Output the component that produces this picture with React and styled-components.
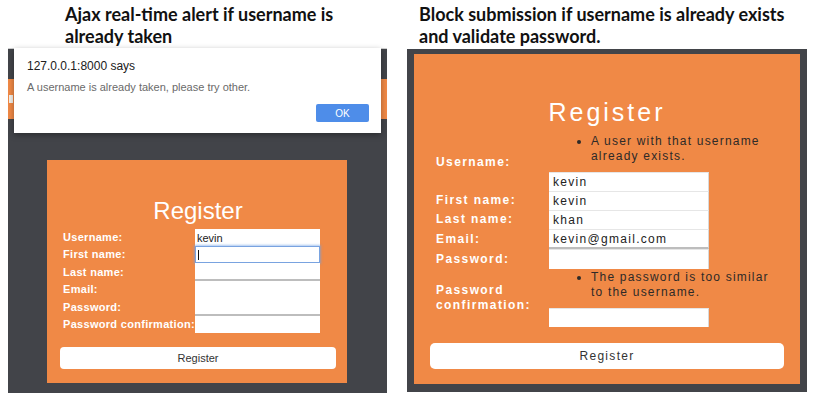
import React from "react";
import styled, { createGlobalStyle, css } from "styled-components";

const ORANGE = "#F08946";
const DARK = "#424449";

const Global = createGlobalStyle`
  html, body { margin: 0; padding: 0; background: #fff; }
  body {
    font-family: "Liberation Sans", Arial, sans-serif;
    width: 815px;
    height: 400px;
    overflow: hidden;
  }
`;

const Page = styled.div`
  display: flex;
  gap: 20px;
  padding-left: 8px;
`;

const Column = styled.section`
  display: flex;
  flex-direction: column;
  width: ${(p) => p.$w}px;
`;

const Heading = styled.h2`
  margin: 0;
  box-sizing: border-box;
  height: ${(p) => p.$h}px;
  padding: 3px 0 0 ${(p) => p.$indent}px;
  font-family: Lato, "Open Sans", sans-serif;
  font-weight: 700;
  font-size: 18px;
  line-height: 22px;
  color: #111;
  white-space: nowrap;
`;

/* ---------- left: browser screen with alert ---------- */

const Screen = styled.div`
  position: relative;
  box-sizing: border-box;
  height: 345px;
  background: ${DARK};
  border-top: 1px solid #cfcfcf;
  display: flex;
  flex-direction: column;
`;

const NavBar = styled.div`
  margin-top: 30px;
  height: 40px;
  background: ${ORANGE};
  display: flex;
  align-items: center;
  padding-left: 1px;
`;

const NavMark = styled.span`
  width: 4px;
  height: 8px;
  background: #f3efe9;
`;

const Alert = styled.div`
  position: absolute;
  top: -1px;
  left: 6px;
  width: 367px;
  height: 85px;
  box-sizing: border-box;
  background: #fff;
  padding: 11px 12px 11px 13px;
  display: flex;
  flex-direction: column;
  box-shadow: 0 2px 6px rgba(0, 0, 0, 0.35);
`;

const AlertTitle = styled.div`
  font-size: 12px;
  line-height: 14px;
  color: #202020;
`;

const AlertText = styled.div`
  margin-top: 7px;
  font-size: 11px;
  line-height: 14px;
  color: #6a6a6a;
`;

const OkButton = styled.button`
  align-self: flex-end;
  margin-top: 10px;
  width: 53px;
  height: 18px;
  border: none;
  border-radius: 2px;
  background: #4e8de9;
  color: #fff;
  font-family: "Liberation Sans", Arial, sans-serif;
  font-size: 10px;
  padding: 0;
`;

/* ---------- right: framed page ---------- */

const Frame = styled.div`
  box-sizing: border-box;
  height: 343px;
  background: ${DARK};
  padding: 5px 7px 8px;
  display: flex;
`;

/* ---------- shared form parts ---------- */

const V = {
  left: {
    pad: "0 11px 0 13px",
    padTop: 37,
    titleSize: 24,
    titleLine: 28,
    titleSpacing: 0,
    gridTop: 4,
    gridLeft: 3,
    labelW: 132,
    colW: 125,
    fieldW: 125,
    labelSize: 11,
    labelSpacing: 0.3,
    fieldSize: 11,
    fieldSpacing: 0,
    fieldPad: 2,
    btnTop: 14,
    btnH: 22,
    btnRadius: 4,
    btnSize: 11,
    btnSpacing: 0,
  },
  right: {
    pad: "0 16px",
    padTop: 43,
    titleSize: 25,
    titleLine: 30,
    titleSpacing: 3,
    gridTop: 6,
    gridLeft: 6,
    labelW: 113,
    colW: 230,
    fieldW: 160,
    labelSize: 12,
    labelSpacing: 1.4,
    fieldSize: 12,
    fieldSpacing: 1.3,
    fieldPad: 4,
    btnTop: 16,
    btnH: 26,
    btnRadius: 5,
    btnSize: 12,
    btnSpacing: 1.3,
  },
};

const Card = styled.div`
  box-sizing: border-box;
  background: ${ORANGE};
  display: flex;
  flex-direction: column;
  padding: ${(p) => V[p.$v].pad};
  padding-top: ${(p) => V[p.$v].padTop}px;
  ${(p) =>
    p.$v === "left"
      ? css`
          margin: 41px 40px 0 39px;
          height: 223px;
        `
      : css`
          flex: 1;
        `}
`;

const Title = styled.h1`
  margin: 0;
  text-align: center;
  font-weight: 400;
  color: #fff;
  font-size: ${(p) => V[p.$v].titleSize}px;
  line-height: ${(p) => V[p.$v].titleLine}px;
  letter-spacing: ${(p) => V[p.$v].titleSpacing}px;
`;

const FormGrid = styled.div`
  display: grid;
  grid-template-columns: ${(p) => V[p.$v].labelW}px ${(p) => V[p.$v].colW}px;
  align-items: center;
  margin-top: ${(p) => V[p.$v].gridTop}px;
  margin-left: ${(p) => V[p.$v].gridLeft}px;
`;

const Label = styled.label`
  color: #fff;
  font-weight: 700;
  font-size: ${(p) => V[p.$v].labelSize}px;
  letter-spacing: ${(p) => V[p.$v].labelSpacing}px;
  line-height: 15px;
  white-space: ${(p) => (p.$v === "left" ? "nowrap" : "normal")};
`;

const FieldCell = styled.div`
  display: flex;
  flex-direction: column;
  align-items: flex-start;
`;

const ErrorList = styled.ul`
  margin: 1px 0 8px;
  padding-left: 42px;
  list-style: disc;
  color: #2e2a28;
  font-size: 12px;
  line-height: 15px;
  letter-spacing: 1.2px;
  width: 185px;
`;

const Field = styled.div`
  box-sizing: border-box;
  width: ${(p) => V[p.$v].fieldW}px;
  height: ${(p) => p.$h}px;
  background: #fff;
  display: flex;
  align-items: center;
  padding-left: ${(p) => V[p.$v].fieldPad}px;
  color: #222;
  font-size: ${(p) => V[p.$v].fieldSize}px;
  letter-spacing: ${(p) => V[p.$v].fieldSpacing}px;
  ${(p) =>
    p.$v === "right" &&
    css`
      border-right: 1px solid #d9d9d9;
      border-top: 1px solid #e6e6e6;
    `}
  ${(p) =>
    p.$line &&
    css`
      border-bottom: 2px solid #bdbdbd;
    `}
  ${(p) =>
    p.$focus &&
    css`
      border: 1px solid #79a3e0;
      box-shadow: 0 0 2px 1px rgba(110, 160, 230, 0.6);
    `}
`;

const Caret = styled.span`
  width: 1px;
  height: 10px;
  background: #111;
`;

const SubmitButton = styled.button`
  margin-top: ${(p) => V[p.$v].btnTop}px;
  height: ${(p) => V[p.$v].btnH}px;
  border: none;
  border-radius: ${(p) => V[p.$v].btnRadius}px;
  background: #fff;
  color: #333;
  font-family: "Liberation Sans", Arial, sans-serif;
  font-size: ${(p) => V[p.$v].btnSize}px;
  letter-spacing: ${(p) => V[p.$v].btnSpacing}px;
  padding: 0;
`;

const leftRows = [
  { label: "Username:", value: "kevin", h: 17 },
  { label: "First name:", focus: true, h: 17 },
  { label: "Last name:", line: true, h: 18 },
  { label: "Email:", h: 17 },
  { label: "Password:", line: true, h: 18 },
  { label: "Password confirmation:", h: 17 },
];

const rightRows = [
  { label: "Username:", value: "kevin", h: 19, errors: ["A user with that username already exists."] },
  { label: "First name:", value: "kevin", h: 19 },
  { label: "Last name:", value: "khan", h: 19 },
  { label: "Email:", value: "kevin@gmail.com", h: 20, line: true },
  { label: "Password:", h: 20 },
  { label: "Password confirmation:", h: 19, errors: ["The password is too similar to the username."] },
];

function Form({ v, rows }) {
  return (
    <>
      <Title $v={v}>Register</Title>
      <FormGrid $v={v}>
        {rows.map((r) => (
          <React.Fragment key={r.label}>
            <Label $v={v}>{r.label}</Label>
            <FieldCell>
              {r.errors && (
                <ErrorList>
                  {r.errors.map((e) => (
                    <li key={e}>{e}</li>
                  ))}
                </ErrorList>
              )}
              <Field $v={v} $h={r.h} $line={r.line} $focus={r.focus}>
                {r.focus ? <Caret /> : r.value}
              </Field>
            </FieldCell>
          </React.Fragment>
        ))}
      </FormGrid>
      <SubmitButton $v={v}>Register</SubmitButton>
    </>
  );
}

export default function App() {
  return (
    <>
      <Global />
      <Page>
        <Column $w={379}>
          <Heading $h={48} $indent={57}>
            Ajax real-time alert if username is
            <br />
            already taken
          </Heading>
          <Screen>
            <NavBar>
              <NavMark />
            </NavBar>
            <Card $v="left">
              <Form v="left" rows={leftRows} />
            </Card>
            <Alert>
              <AlertTitle>127.0.0.1:8000 says</AlertTitle>
              <AlertText>A username is already taken, please try other.</AlertText>
              <OkButton>OK</OkButton>
            </Alert>
          </Screen>
        </Column>
        <Column $w={400}>
          <Heading $h={49} $indent={12}>
            Block submission if username is already exists
            <br />
            and validate password.
          </Heading>
          <Frame>
            <Card $v="right">
              <Form v="right" rows={rightRows} />
            </Card>
          </Frame>
        </Column>
      </Page>
    </>
  );
}
